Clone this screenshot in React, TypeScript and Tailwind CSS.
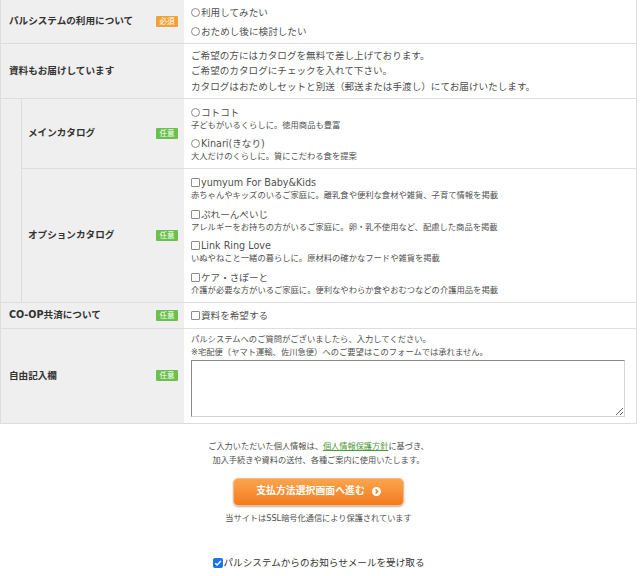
const mainCatalogs = [
  { name: 'コトコト', desc: '子どもがいるくらしに。徳用商品も豊富' },
  { name: 'Kinari(きなり)', desc: '大人だけのくらしに。質にこだわる食を提案' },
];

const optionCatalogs = [
  { name: 'yumyum For Baby&Kids', desc: '赤ちゃんやキッズのいるご家庭に。離乳食や便利な食材や雑貨、子育て情報を掲載' },
  { name: 'ぷれーんぺいじ', desc: 'アレルギーをお持ちの方がいるご家庭に。卵・乳不使用など、配慮した商品を掲載' },
  { name: 'Link Ring Love', desc: 'いぬやねこと一緒の暮らしに。原材料の確かなフードや雑貨を掲載' },
  { name: 'ケア・さぽーと', desc: '介護が必要な方がいるご家庭に。便利なやわらか食やおむつなどの介護用品を掲載' },
];

function Radio() {
  return <span className="inline-block w-[9px] h-[9px] rounded-full border border-[#8c8c8c] mr-[1px] align-[-1px]" />;
}

function Check() {
  return <span className="inline-block w-[9px] h-[9px] rounded-[1px] border border-[#8c8c8c] mr-[1px] align-[-1px]" />;
}

function Badge({ required }: { required?: boolean }) {
  return (
    <span
      className={
        required
          ? 'w-[22px] h-[11px] bg-[#eea23a] text-white text-[7.5px] leading-[11px] text-center rounded-[1px]'
          : 'w-[22px] h-[11px] bg-[#6bbf4c] text-white text-[7.5px] leading-[11px] text-center rounded-[1px]'
      }
    >
      {required ? '必須' : '任意'}
    </span>
  );
}

function Label({ text, badge, nested }: { text: string; badge?: 'req' | 'opt'; nested?: boolean }) {
  return (
    <div
      className={
        nested
          ? 'w-[162px] shrink-0 flex items-center justify-between bg-[#efefef] pl-[6px] pr-[6px]'
          : 'w-[183px] shrink-0 flex items-center justify-between bg-[#efefef] pl-2 pr-[6px]'
      }
    >
      <span className="font-bold text-[#333]">{text}</span>
      {badge && <Badge required={badge === 'req'} />}
    </div>
  );
}

function CatalogList({ items, radio }: { items: { name: string; desc: string }[]; radio?: boolean }) {
  return (
    <div
      className={
        radio
          ? 'flex-1 bg-white px-[7px] py-[6px] flex flex-col gap-[5px]'
          : 'flex-1 bg-white px-[7px] py-[6.5px] flex flex-col gap-[5.5px]'
      }
    >
      {items.map((item, index) => (
        <div key={index}>
          <div className="leading-[15px]">
            {radio ? <Radio /> : <Check />}
            {item.name}
          </div>
          <div className="text-[8.3px] leading-[11px]">{item.desc}</div>
        </div>
      ))}
    </div>
  );
}

function App() {
  return (
    <div className="w-[640px] bg-white text-[9.6px] text-[#505050] font-['DejaVu_Sans','Noto_Sans_CJK_JP',sans-serif]">
      {/* Form table */}
      <div className="w-[637px] border-l border-r border-[#ddd]">
        <div className="flex border-b border-[#ddd]">
          <Label text="パルシステムの利用について" badge="req" />
          <div className="flex-1 bg-white px-[7px] py-[4.5px] flex flex-col gap-[4px] leading-[15px]">
            <div>
              <Radio />
              利用してみたい
            </div>
            <div>
              <Radio />
              おためし後に検討したい
            </div>
          </div>
        </div>

        <div className="flex border-b border-[#ddd]">
          <Label text="資料もお届けしています" />
          <div className="flex-1 bg-white px-[7px] py-[3.5px] leading-[15.5px]">
            <p>ご希望の方にはカタログを無料で差し上げております。</p>
            <p>ご希望のカタログにチェックを入れて下さい。</p>
            <p>カタログはおためしセットと別送（郵送または手渡し）にてお届けいたします。</p>
          </div>
        </div>

        <div className="flex border-b border-[#ddd]">
          <div className="w-[21px] shrink-0 bg-[#efefef] border-r border-[#ddd]" />
          <div className="flex-1 flex flex-col">
            <div className="flex border-b border-[#ddd]">
              <Label text="メインカタログ" badge="opt" nested />
              <CatalogList items={mainCatalogs} radio />
            </div>
            <div className="flex">
              <Label text="オプションカタログ" badge="opt" nested />
              <CatalogList items={optionCatalogs} />
            </div>
          </div>
        </div>

        <div className="flex border-b border-[#ddd]">
          <Label text="CO-OP共済について" badge="opt" />
          <div className="flex-1 bg-white px-[7px] py-[5px] leading-[15px]">
            <Check />
            資料を希望する
          </div>
        </div>

        <div className="flex border-b border-[#ddd]">
          <Label text="自由記入欄" badge="opt" />
          <div className="flex-1 bg-white pl-[7px] pt-[4px] pb-[6px]">
            <p className="text-[8.3px] leading-[13.3px]">パルシステムへのご質問がございましたら、入力してください。</p>
            <p className="text-[8.3px] leading-[13.3px]">※宅配便（ヤマト運輸、佐川急便）へのご要望はこのフォームでは承れません。</p>
            <textarea className="block w-[434px] h-[57px] border border-[#d5d5d5] border-t-[#8a8a8a] border-l-[#8a8a8a] bg-white" />
          </div>
        </div>
      </div>

      {/* Footer */}
      <div className="w-[637px] flex flex-col items-center text-center">
        <div className="mt-[15px] text-[8.2px] leading-[14.3px]">
          <p>
            ご入力いただいた個人情報は、
            <a className="text-[#4f9a3c] underline">個人情報保護方針</a>
            に基づき、
          </p>
          <p>加入手続きや資料の送付、各種ご案内に使用いたします。</p>
        </div>
        <button className="mt-[10.5px] w-[171px] h-[28px] rounded-[5px] border border-[#f7b98a] bg-gradient-to-b from-[#fba54c] to-[#f27a1c] shadow-[0_1px_2px_rgba(0,0,0,0.3)] flex items-center justify-center gap-[7px] text-white font-bold text-[9.9px]">
          支払方法選択画面へ進む
          <svg width="9" height="9" viewBox="0 0 10 10">
            <circle cx="5" cy="5" r="5" fill="#fff" />
            <path d="M4 2.8 L6.2 5 L4 7.2" stroke="#f27a1c" strokeWidth="1.6" fill="none" />
          </svg>
        </button>
        <p className="mt-[5px] text-[8.2px] leading-[14px]">当サイトはSSL暗号化通信により保護されています</p>
        <p className="mt-[30px] leading-[16px] text-[#333] flex items-center">
          <svg width="10" height="10" viewBox="0 0 10 10" className="mr-[1px]">
            <rect width="10" height="10" rx="2" fill="#1a73e8" />
            <path d="M2.2 5.2 L4.1 7 L7.9 2.9" stroke="#fff" strokeWidth="1.5" fill="none" />
          </svg>
          パルシステムからのお知らせメールを受け取る
        </p>
      </div>
    </div>
  );
}

export default App;
